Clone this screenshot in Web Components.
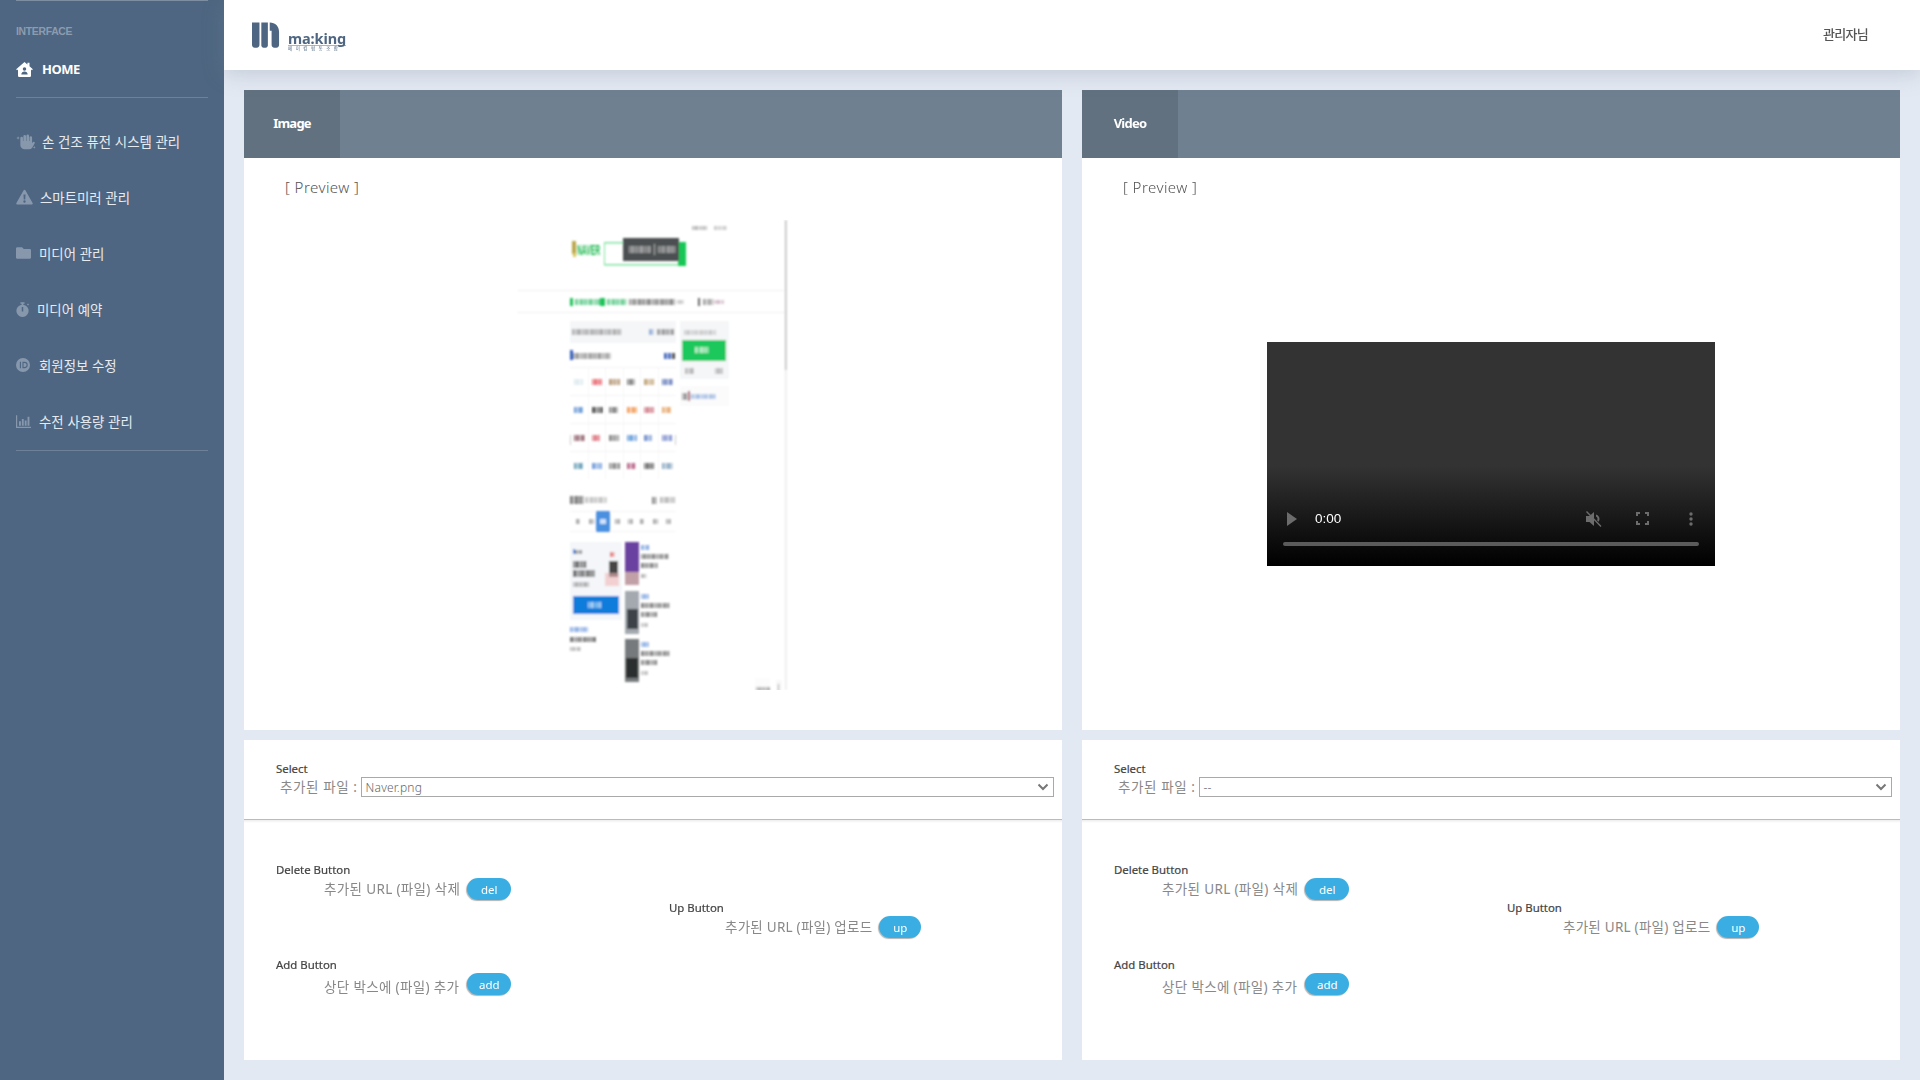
<!DOCTYPE html>
<html lang="ko">
<head>
<meta charset="utf-8">
<title>ma:king</title>
<style>
html, body { margin: 0; height: 100%; }
body {
	background: #e3e9f2;
	font-family: "Noto Sans", "Noto Sans CJK KR", sans-serif;
	overflow: hidden;
}
</style>
</head>
<body>
<admin-shell>
	<side-nav slot="side"></side-nav>
	<top-bar slot="top"></top-bar>
	<media-panel title="Image" first-file="Naver.png">
		<naver-thumb slot="preview"></naver-thumb>
	</media-panel>
	<media-panel title="Video" first-file="--">
		<video-mock slot="preview"></video-mock>
	</media-panel>
</admin-shell>

<script>
class AdminShell extends HTMLElement {
	constructor() {
		super();
		this.attachShadow({mode: 'open'}).innerHTML = `<style>
:host {
	display: grid;
	grid-template-columns: 224px 1fr;
	height: 1080px;
}
main {
	display: flex;
	flex-direction: column;
	min-width: 0;
}
#panels {
	display: grid;
	grid-template-columns: 1fr 1fr;
	gap: 20px;
	padding: 20px;
}
</style>
<slot name="side"></slot>
<main>
	<slot name="top"></slot>
	<div id="panels"><slot></slot></div>
</main>`;
	}
}

class SideNav extends HTMLElement {
	constructor() {
		super();
		const icons = {
			hand: ['0 0 23 19', 20, 17, `<path d="M5 5.500a1.500 1.500 0 0 1 3 0V9h.5V3.500a1.500 1.500 0 0 1 3 0V9h.5V3a1.500 1.500 0 0 1 3 0v6h.5V5a1.500 1.500 0 0 1 3 0v6.500l1-1.300a1.200 1.200 0 0 1 2 1.300l-2.500 4.500a5 5 0 0 1-4.500 2.500H10a5 5 0 0 1-5-5z"/><path d="M2.400 3.500l.6 1.400 1.400.6-1.400.6-.6 1.400-.6-1.400L.4 5.500l1.400-.6zM21 14.500l.5 1.200 1.200.5-1.200.5-.5 1.200-.5-1.200-1.200-.5 1.200-.5z"/>`],
			warn: ['0 0 20 19', 17, 16, `<path fill-rule="evenodd" d="M10 1c.5 0 .9.3 1.200.7l8.400 14.800c.5.9-.1 2-1.200 2H1.600c-1.100 0-1.700-1.100-1.200-2L8.800 1.700C9.100 1.300 9.500 1 10 1zM8.800 6.500l.3 6h1.800l.3-6zM10 13.400a1.400 1.400 0 1 0 0 2.800 1.400 1.400 0 0 0 0-2.800z"/>`],
			folder: ['0 0 18 14', 15, 12, `<path d="M1.500 0h5.800l2 2.200h7.200c.8 0 1.500.7 1.500 1.500v8.800c0 .8-.7 1.500-1.500 1.500h-15C.7 14 0 13.300 0 12.500v-11C0 .7.700 0 1.500 0z"/>`],
			watch: ['0 0 16 18', 13, 15, `<path fill-rule="evenodd" d="M5.500 0h5v1.800H9v1.400a7.500 7.500 0 1 1-2 0V1.800H5.500zM7.100 6v5.500h1.800V6z"/><path d="M13.500 2.700l1.300-1.200 1.200 1.300-1.200 1.300z"/>`],
			id: ['0 0 20 20', 14, 14, `<path fill-rule="evenodd" d="M10 0a10 10 0 1 0 0 20 10 10 0 0 0 0-20zM5.500 5.500h1.600v9H5.500zM9.200 5.500h3a4.500 4.500 0 0 1 0 9h-3zm1.600 1.500v6h1.400a3 3 0 0 0 0-6z"/>`],
			chart: ['0 0 20 17', 15, 13, `<path d="M0 0h1.600v15.400H20V17H0z"/><path d="M4 8h2.500v6H4zM7.800 5h2.500v9H7.800zM11.600 7h2.500v7h-2.500zM15.400 2h2.500v12h-2.500z"/>`]
		};
		const items = [
			['hand', '손 건조 퓨전 시스템 관리', 26],
			['warn', '스마트미러 관리', 24],
			['folder', '미디어 관리', 23],
			['watch', '미디어 예약', 21],
			['id', '회원정보 수정', 23],
			['chart', '수전 사용량 관리', 23]
		];
		const rows = items.map(([icon, label, left]) => {
			const [box, w, h, d] = icons[icon];
			return `<a style="grid-template-columns:${left}px 1fr">
				<svg viewBox="${box}" width="${w}" height="${h}" fill="#8798ad">${d}</svg>
				<span>${label}</span>
			</a>`;
		}).join('');
		this.attachShadow({mode: 'open'}).innerHTML = `<style>
:host {
	display: block;
	background: #4e6681;
	height: 1080px;
	padding: 0 16px;
	box-sizing: border-box;
	overflow: hidden;
}
hr {
	border: 0;
	border-top: 1px solid #6d8198;
	margin: 0;
}
#title {
	color: #8c9cb0;
	font: 700 10.400px "Liberation Sans", sans-serif;
	line-height: 14px;
	letter-spacing: -.3px;
	padding-top: 24px;
}
#home {
	display: flex;
	align-items: center;
	gap: 9px;
	color: #fff;
	font: 700 13px "Noto Sans", sans-serif;
	letter-spacing: -.5px;
	height: 28px;
	margin: 16px 0 14px;
}
#list { padding-top: 15px; }
a {
	display: grid;
	align-items: center;
	height: 56px;
	color: #e6ebf1;
	font: 400 13.400px "Noto Sans CJK KR", sans-serif;
	white-space: nowrap;
}
</style>
<hr style="border-color:#7d8ea3">
<div id="title">INTERFACE</div>
<div id="home">
	<svg viewBox="0 0 20 18" width="17" height="15" fill="#fff"><path fill-rule="evenodd" d="M10 0l3.500 3V1h2.500v4.200L20 8.800l-1 1.200-1.200-1v7.500c0 .8-.6 1.500-1.500 1.500H3.700c-.9 0-1.500-.7-1.500-1.500V9L1 10 0 8.800zM10 6.200a2.100 2.100 0 1 0 0 4.200 2.100 2.100 0 0 0 0-4.200zM6.200 15h7.600c0-2-1.700-3.600-3.800-3.600S6.200 13 6.200 15z"/></svg>
	<span>HOME</span>
</div>
<hr>
<div id="list">${rows}</div>
<hr style="margin-top:1px">`;
	}
}

class TopBar extends HTMLElement {
	constructor() {
		super();
		this.attachShadow({mode: 'open'}).innerHTML = `<style>
:host {
	display: flex;
	align-items: center;
	justify-content: space-between;
	height: 70px;
	background: #fff;
	box-shadow: 0 4px 20px rgba(120, 135, 160, .3);
	padding: 0 52px 0 28px;
	position: relative;
}
#logo {
	display: flex;
	align-items: flex-end;
	gap: 8px;
	color: #4e6681;
}
#word {
	display: flex;
	flex-direction: column;
	line-height: 1;
	margin-bottom: -2px;
}
b {
	font: 700 14.500px "Noto Sans", sans-serif;
	letter-spacing: -.1px;
	line-height: 14px;
	border-bottom: 1px solid #a9b5c4;
}
small {
	font: 400 4.500px "Noto Sans CJK KR", sans-serif;
	letter-spacing: 3.500px;
	line-height: 5px;
	white-space: nowrap;
}
#user {
	color: #555;
	font: 500 13px "Noto Sans CJK KR", sans-serif;
	letter-spacing: -.7px;
	margin-top: -4px;
}
</style>
<div id="logo">
	<svg viewBox="0 0 30 28" width="28" height="27" fill="#4e6681"><path d="M0 0h8v24a3 3 0 0 1-3 3H3a3 3 0 0 1-3-3zM10 0h7v24a2.500 2.500 0 0 1-2.500 3h-2a2.500 2.500 0 0 1-2.500-3zM19 0c6 0 10 4 10 10v14a3 3 0 0 1-3 3h-2a3 3 0 0 1-3-3V9h-2z"/></svg>
	<div id="word"><b>ma:king</b><small>메이킹협동조합</small></div>
</div>
<div id="user">관리자님</div>`;
	}
}

class MediaPanel extends HTMLElement {
	constructor() {
		super();
		const title = this.getAttribute('title');
		const file = this.getAttribute('first-file');
		this.removeAttribute('title');
		this.attachShadow({mode: 'open'}).innerHTML = `<style>
:host {
	display: flex;
	flex-direction: column;
	min-width: 0;
	font-family: "Noto Sans", "Noto Sans CJK KR", sans-serif;
}
.card { background: #fff; }
#head {
	display: flex;
	height: 68px;
	background: #6f8091;
}
#tab {
	display: flex;
	align-items: center;
	justify-content: center;
	width: 96px;
	padding-bottom: 2px;
	box-sizing: border-box;
	background: #62717f;
	color: #fff;
	font-weight: 700;
	font-size: 13px;
	letter-spacing: -.75px;
}
#preview {
	height: 572px;
	display: flex;
	flex-direction: column;
}
#cap {
	color: #555;
	font-size: 15px;
	font-weight: 300;
	line-height: 20px;
	padding: 19px 0 0 41px;
	letter-spacing: .45px;
}
#stage {
	flex: 1;
	display: flex;
	align-items: center;
	justify-content: center;
	padding-bottom: 20px;
}
h4 {
	margin: 0;
	font-size: 11.400px;
	font-weight: 400;
	line-height: 16px;
	color: #444;
	-webkit-text-stroke: .2px #444;
}
#select {
	height: 79px;
	margin-top: 10px;
	border-bottom: 1px solid #bbb;
	padding: 0 8px 0 32px;
	display: flex;
	flex-direction: column;
}
#select h4 { margin-top: 21px; }
#pick {
	display: flex;
	align-items: center;
	gap: 3px;
	margin-left: 4px;
	color: #888;
	font-size: 13.500px;
	letter-spacing: .6px;
}
#pick > span { margin-top: -2px; }
#fake {
	flex: 1;
	height: 20px;
	box-sizing: border-box;
	border: 1px solid #a9a9a9;
	display: flex;
	align-items: center;
	justify-content: space-between;
	padding: 0 4px;
	font-size: 12px;
	font-weight: 300;
	letter-spacing: .2px;
	color: #666;
}
#btns {
	height: 240px;
	display: grid;
	grid-template-columns: 1fr 1fr;
	background: linear-gradient(#ededed, #fff 3px);
}
</style>
<div id="head" class="card"><div id="tab">${title}</div></div>
<div id="preview" class="card">
	<div id="cap">[ Preview ]</div>
	<div id="stage"><slot name="preview"></slot></div>
</div>
<div id="select" class="card">
	<h4>Select</h4>
	<div id="pick">
		<span>추가된 파일 :</span>
		<div id="fake"><span>${file}</span>
			<svg width="12" height="8" viewBox="0 0 12 8"><path d="M1.500 1.500L6 6l4.500-4.500" fill="none" stroke="#777" stroke-width="2"/></svg>
		</div>
	</div>
</div>
<div id="btns">
	<div>
		<action-row style="margin:42px 0 0 32px;--nudge:-2px" heading="Delete Button" label="추가된 URL (파일) 삭제" btn="del"></action-row>
		<action-row style="margin:57px 0 0 32px;--nudge:3px;--gap:8px" heading="Add Button" label="상단 박스에 (파일) 추가" btn="add"></action-row>
	</div>
	<div>
		<action-row style="margin:80px 0 0 16px;--indent:56px;--btn:42px;--nudge:-2px;--track:.25px" heading="Up Button" label="추가된 URL (파일) 업로드" btn="up"></action-row>
	</div>
</div>`;
	}
}

class ActionRow extends HTMLElement {
	constructor() {
		super();
		const heading = this.getAttribute('heading');
		const label = this.getAttribute('label');
		const btn = this.getAttribute('btn');
		this.attachShadow({mode: 'open'}).innerHTML = `<style>
:host { display: block; }
h4 {
	margin: 0;
	font: 400 11.400px/16px "Noto Sans", sans-serif;
	color: #444;
	-webkit-text-stroke: .2px #444;
}
#row {
	display: flex;
	align-items: center;
	gap: var(--gap, 7px);
	padding-left: var(--indent, 48px);
	height: 22px;
}
span {
	font: 400 13.500px "Noto Sans", "Noto Sans CJK KR", sans-serif;
	letter-spacing: var(--track, .35px);
	color: #888;
	white-space: nowrap;
	margin-top: var(--nudge, 0);
}
button {
	width: var(--btn, 44px);
	height: 22px;
	padding: 0;
	border: 0;
	border-radius: 11px;
	background: #3aaee2;
	color: #fff;
	font: 400 11.500px "Noto Sans", sans-serif;
	box-shadow: -1px 1px 1px rgba(0, 0, 0, .3);
}
</style>
<h4>${heading}</h4>
<div id="row"><span>${label}</span><button>${btn}</button></div>`;
	}
}

class VideoMock extends HTMLElement {
	constructor() {
		super();
		this.attachShadow({mode: 'open'}).innerHTML = `<style>
:host {
	display: flex;
	flex-direction: column;
	justify-content: flex-end;
	width: 448px;
	height: 224px;
	background: linear-gradient(#333 0, #333 55%, #000 100%);
	color: #fff;
	font: 400 13.500px "Liberation Sans", sans-serif;
}
#ctl {
	display: flex;
	align-items: center;
	height: 24px;
	padding: 0 22px 0 20px;
}
#time { margin-left: 18px; flex: 1; }
svg { display: block; fill: #6c6c6c; }
#line {
	height: 4px;
	border-radius: 2px;
	background: #5b5b5b;
	margin: 11px 16px 20px;
}
</style>
<div id="ctl">
	<svg width="10" height="14" viewBox="0 0 10 14"><path d="M0 0l10 7-10 7z"/></svg>
	<span id="time">0:00</span>
	<svg width="18" height="18" viewBox="0 0 18 18"><path d="M1 6h3.500L9 2v14l-4.500-4H1z"/><path d="M11 4.500c2.500 1 3.500 2.500 3.500 4.500 0 1-.3 2-1 2.800L12 10.300c.3-.4.500-.8.500-1.300 0-1.200-.5-2-1.500-2.500zM2 1l14.500 15-1 1L1 2z"/></svg>
	<svg style="margin-left:33px" width="13" height="13" viewBox="0 0 13 13"><path d="M0 0h4v2H2v2H0zM9 0h4v4h-2V2H9zM0 9h2v2h2v2H0zM11 9h2v4H9v-2h2z"/></svg>
	<svg style="margin-left:40px" width="4" height="14" viewBox="0 0 4 14"><circle cx="2" cy="2" r="1.700"/><circle cx="2" cy="7" r="1.700"/><circle cx="2" cy="12" r="1.700"/></svg>
</div>
<div id="line"></div>`;
	}
}

// The thumbnail is a blurred screenshot of a portal, its small text can't be read.
class NaverThumb extends HTMLElement {
	constructor() {
		super();
		const r = (x, y, w, h, c, o = 1) => `<rect x="${x}" y="${y}" width="${w}" height="${h}" fill="${c}" opacity="${o}"/>`;
		// t draws a run of blurred letters, widths vary so it doesn't read as dots
		const t = (x, y, w, h, c, o = .6) => {
			const widths = [1.5, 2.5, 1, 3, 2, 1.5, 3.5, 1];
			let s = '';
			let i = Math.round(x + y) % widths.length;
			for (let at = 0; at < w - 1;) {
				const bar = Math.min(widths[i++ % widths.length], w - at);
				s += r(x + at, y, bar, h, c, o);
				at += bar + .8;
			}
			return s;
		};
		let art = '';
		art += r(268, 0, 1.500, 470, '#eaeaea') + r(268, 0, 1.500, 150, '#bdbdbd');
		art += t(175, 6, 16, 4, '#999', .7) + t(197, 6, 13, 4, '#aaa', .6);
		// logo and search box
		art += r(55, 21, 4, 13, '#b9a64a') + r(56, 33, 3, 4, '#d8c860');
		art += `<text x="60" y="35" font-family="Liberation Sans, sans-serif" font-weight="700" font-size="15" fill="#14b74a" textLength="23" lengthAdjust="spacingAndGlyphs">NAVER</text>`;
		art += r(87, 22, 82, 1.500, '#7ee29e') + r(87, 44, 82, 1.500, '#7ee29e') + r(87, 22, 1, 23, '#7ee29e');
		art += r(161, 22, 8, 24, '#19c757');
		art += r(106, 18, 56, 23, '#4c4f51') + t(112, 26, 22, 7, '#b5b7b8', .8) + r(137, 24, 1, 11, '#aaa') + t(141, 26, 18, 7, '#b5b7b8', .8);
		// nav rows
		art += r(0, 70, 268, 1, '#f2f2f2') + r(0, 92, 268, 1, '#f0f0f0');
		art += t(53, 78, 4, 8, '#1cc35a', 1) + t(58, 79, 25, 6, '#27b862', .7) + r(83, 78, 5, 8, '#1cc35a') + t(90, 79, 20, 6, '#27b862', .7);
		art += t(112, 79, 46, 6, '#555', .7) + t(160, 80, 8, 4, '#888', .5);
		art += r(181, 78, 2, 8, '#666') + t(186, 79, 10, 6, '#666', .6) + t(197, 80, 10, 4, '#c6a9b9', .8);
		// left and right boxes
		art += r(53, 101, 106, 22, '#f5f6f8') + t(55, 109, 50, 6, '#777', .6) + t(132, 109, 6, 6, '#5a86c8', .7) + t(140, 109, 17, 6, '#555', .6);
		art += r(163, 101, 49, 58, '#f5f6f8') + t(167, 110, 32, 5, '#aaa', .6);
		art += r(165, 120, 44, 21, '#1dc85c') + t(178, 127, 14, 6, '#bff0cf', 1);
		art += t(168, 148, 9, 6, '#888', .6) + t(198, 148, 8, 6, '#888', .6);
		art += r(53, 130, 3, 10, '#3a62c0') + t(56, 133, 38, 6, '#555', .6) + r(147, 133, 3, 6, '#4a6cc0') + r(151, 133, 3, 6, '#4a6cc0') + r(155, 133, 3, 6, '#555');
		art += r(163, 166, 49, 20, '#fbfbfb') + t(165, 173, 6, 7, '#555', .7) + r(171, 171, 2, 10, '#a03050') + t(174, 174, 25, 5, '#7aa0d8', .7);
		// logo grid
		const cols = [53, 71, 88, 106, 123, 141];
		const rowsY = [147, 175, 203, 231, 259];
		const tints = [
			['#cfe2ea', '#e0303c', '#a07a50', '#555', '#b08a50', '#3a5aa8'],
			['#3a78c8', '#222', '#444', '#ef7a20', '#c05060', '#e09040'],
			['#703040', '#d04050', '#666', '#3a80d0', '#4a70c0', '#5a70c0'],
			['#3a80a0', '#4a80d0', '#555', '#a03060', '#333', '#6a90b0']
		];
		tints.forEach((row, i) => row.forEach((c, j) => {
			art += t(cols[j] + 4, rowsY[i] + 12, 9 + (i + j) % 3, 6, c, .75);
		}));
		[147, 175, 203, 231].forEach(y => { art += r(53, y, 106, 1, '#f4f4f4'); });
		cols.slice(1).forEach(x => { art += r(x, 147, 1, 112, '#f6f6f6'); });
		art += r(53, 215, 1, 10, '#ccc') + r(158, 215, 1, 10, '#ccc');
		// topic section
		art += t(53, 276, 14, 8, '#555', .8) + t(68, 277, 23, 6, '#999', .6) + t(135, 277, 5, 7, '#555', .7) + t(143, 277, 15, 6, '#888', .6);
		art += r(53, 291, 106, 1, '#f4f4f4') + r(53, 311, 106, 1, '#f4f4f4');
		[59, 72, 98, 111, 123, 136, 149].forEach(x => { art += t(x, 299, 5, 5, '#777', .6); });
		art += r(79, 291, 14, 21, '#4a90e0') + r(83, 299, 6, 5, '#cfe3fa');
		// ad card and cars
		art += r(53, 322, 52, 78, '#f4f6f9') + r(56, 329, 2, 5, '#2d86e0') + t(58, 330, 7, 4, '#555', .7);
		art += t(56, 341, 14, 7, '#444', .8) + t(56, 350, 23, 7, '#444', .8) + t(56, 362, 17, 5, '#777', .6);
		art += r(92, 341, 9, 16, '#444') + r(88, 353, 14, 13, '#f0b8b8', .6) + t(93, 332, 6, 5, '#e03030', .7);
		art += r(56, 376, 46, 18, '#0a7bdb') + t(71, 382, 15, 6, '#a9d2f5', 1);
		art += t(53, 407, 18, 5, '#5a8ad8', .7) + t(53, 417, 27, 5, '#444', .7) + t(53, 427, 11, 4, '#888', .6);
		art += r(108, 322, 14, 43, '#6b3fa0') + r(108, 352, 14, 13, '#c2a0a8');
		art += r(108, 371, 14, 43, '#a3a9ae') + r(110, 389, 11, 20, '#3d4248');
		art += r(108, 419, 14, 43, '#777a7c') + r(109, 438, 12, 20, '#2b2d2f');
		[322, 371, 419].forEach(y => {
			art += t(124, y + 3, 9, 5, '#5a8ad8', .7) + t(124, y + 12, 29, 5, '#555', .7) + t(124, y + 21, 17, 5, '#555', .7) + t(124, y + 32, 7, 4, '#888', .6);
		});
		// floating buttons
		art += r(238, 458, 15, 20, '#fcfcfc') + t(239, 467, 14, 4, '#777', .6) + r(259, 460, 6, 18, '#f8f8f8') + r(261, 464, 1, 9, '#999');
		this.attachShadow({mode: 'open'}).innerHTML = `<style>
:host {
	display: block;
	width: 272px;
	height: 470px;
	margin-top: 3px;
}
svg { display: block; }
</style>
<svg width="272" height="470" viewBox="0 0 272 470">
	<defs><filter id="soft" x="-5%" y="-5%" width="110%" height="110%"><feGaussianBlur stdDeviation="1"/></filter></defs>
	<g filter="url(#soft)">${art}</g>
</svg>`;
	}
}

customElements.define('action-row', ActionRow);
customElements.define('admin-shell', AdminShell);
customElements.define('side-nav', SideNav);
customElements.define('top-bar', TopBar);
customElements.define('media-panel', MediaPanel);
customElements.define('video-mock', VideoMock);
customElements.define('naver-thumb', NaverThumb);
</script>
</body>
</html>
